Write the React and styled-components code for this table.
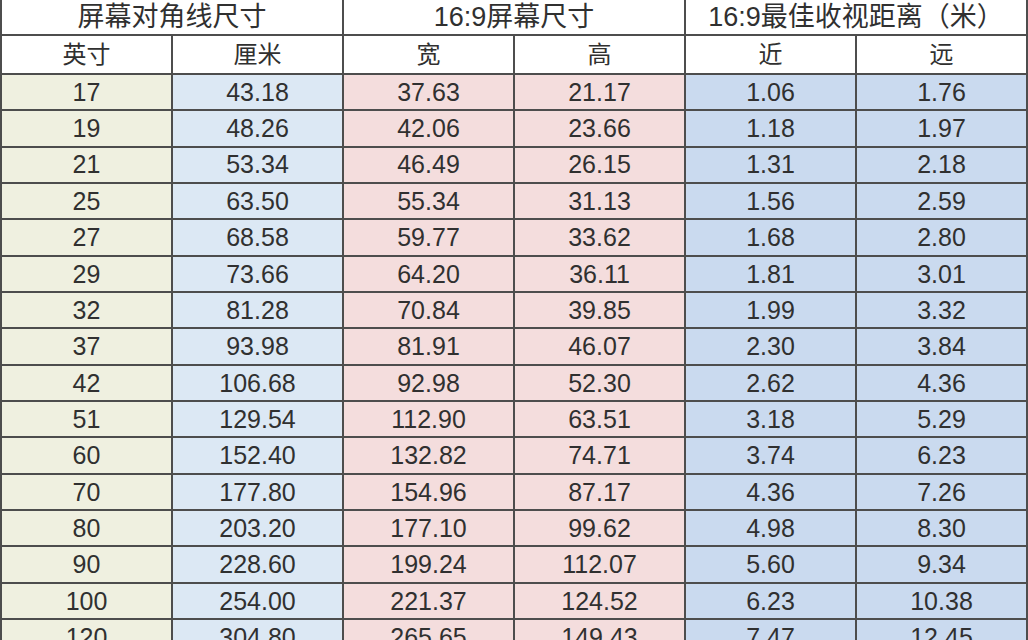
import React from "react";
import styled, { createGlobalStyle } from "styled-components";

const rows = [
    ["17", "43.18", "37.63", "21.17", "1.06", "1.76"],
    ["19", "48.26", "42.06", "23.66", "1.18", "1.97"],
    ["21", "53.34", "46.49", "26.15", "1.31", "2.18"],
    ["25", "63.50", "55.34", "31.13", "1.56", "2.59"],
    ["27", "68.58", "59.77", "33.62", "1.68", "2.80"],
    ["29", "73.66", "64.20", "36.11", "1.81", "3.01"],
    ["32", "81.28", "70.84", "39.85", "1.99", "3.32"],
    ["37", "93.98", "81.91", "46.07", "2.30", "3.84"],
    ["42", "106.68", "92.98", "52.30", "2.62", "4.36"],
    ["51", "129.54", "112.90", "63.51", "3.18", "5.29"],
    ["60", "152.40", "132.82", "74.71", "3.74", "6.23"],
    ["70", "177.80", "154.96", "87.17", "4.36", "7.26"],
    ["80", "203.20", "177.10", "99.62", "4.98", "8.30"],
    ["90", "228.60", "199.24", "112.07", "5.60", "9.34"],
    ["100", "254.00", "221.37", "124.52", "6.23", "10.38"],
    ["120", "304.80", "265.65", "149.43", "7.47", "12.45"],
];

// column tints, one per column
const tints = ["#eff0e0", "#dce8f4", "#f4dddd", "#f4dddd", "#cadaef", "#cadaef"];

const GlobalStyle = createGlobalStyle`
    html, body {
        margin: 0;
        padding: 0;
        background: #ffffff;
        overflow: hidden;
    }
`;

const Sheet = styled.div`
    width: 1028px;
    height: 640px;
    overflow: hidden;
    background: #ffffff;
`;

const Grid = styled.div`
    display: grid;
    grid-template-columns: repeat(6, 1fr);
    grid-template-rows: 34px 37px repeat(16, 34.35px);
    gap: 2px;
    padding: 0 2px;
    background: #4d4d4d;
    font-family: "Liberation Sans", "Noto Sans CJK SC", sans-serif;
    color: #303030;
`;

const Cell = styled.div`
    display: flex;
    align-items: center;
    justify-content: center;
    background: ${(p) => p.$bg || "#ffffff"};
    font-size: 25px;
    line-height: 1.15;
    white-space: nowrap;
`;

const GroupHead = styled(Cell)`
    grid-column: span 2;
    font-size: 27px;
    line-height: 31px;
    padding-top: 1px;
`;

const SubHead = styled(Cell)`
    font-size: 24px;
`;

function App() {
    return (
        <Sheet>
            <GlobalStyle />
            <Grid>
                <GroupHead>屏幕对角线尺寸</GroupHead>
                <GroupHead>16:9屏幕尺寸</GroupHead>
                <GroupHead>16:9最佳收视距离（米）</GroupHead>
                {["英寸", "厘米", "宽", "高", "近", "远"].map((h) => (
                    <SubHead key={h}>{h}</SubHead>
                ))}
                {rows.map((r) =>
                    r.map((v, i) => (
                        <Cell key={r[0] + "-" + i} $bg={tints[i]}>
                            {v}
                        </Cell>
                    ))
                )}
            </Grid>
        </Sheet>
    );
}

export default App;
